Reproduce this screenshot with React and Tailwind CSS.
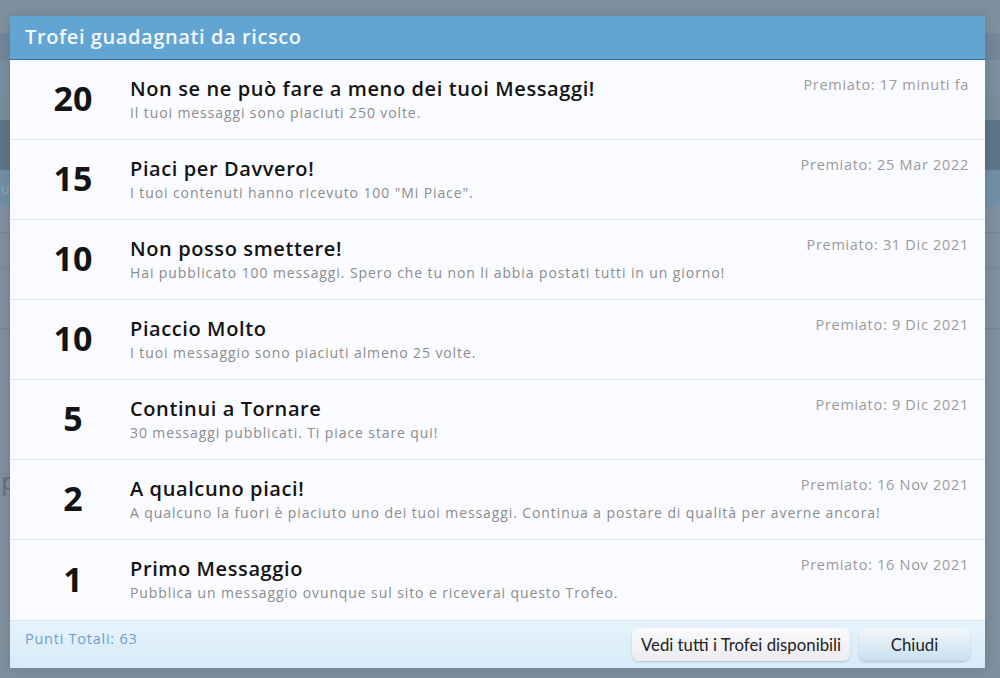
import React from "react";

const trophies = [
  { points: 20, title: "Non se ne può fare a meno dei tuoi Messaggi!", desc: "Il tuoi messaggi sono piaciuti 250 volte.", date: "Premiato: 17 minuti fa" },
  { points: 15, title: "Piaci per Davvero!", desc: 'I tuoi contenuti hanno ricevuto 100 "Mi Piace".', date: "Premiato: 25 Mar 2022" },
  { points: 10, title: "Non posso smettere!", desc: "Hai pubblicato 100 messaggi. Spero che tu non li abbia postati tutti in un giorno!", date: "Premiato: 31 Dic 2021" },
  { points: 10, title: "Piaccio Molto", desc: "I tuoi messaggio sono piaciuti almeno 25 volte.", date: "Premiato: 9 Dic 2021" },
  { points: 5, title: "Continui a Tornare", desc: "30 messaggi pubblicati. Ti piace stare qui!", date: "Premiato: 9 Dic 2021" },
  { points: 2, title: "A qualcuno piaci!", desc: "A qualcuno la fuori è piaciuto uno dei tuoi messaggi. Continua a postare di qualità per averne ancora!", date: "Premiato: 16 Nov 2021" },
  { points: 1, title: "Primo Messaggio", desc: "Pubblica un messaggio ovunque sul sito e riceverai questo Trofeo.", date: "Premiato: 16 Nov 2021" },
];

const TrophyRow = ({ t, last }) => (
  <div className={`relative flex h-[80px] ${last ? "" : "border-b border-[#dfe8ef]"}`}>
    <div className="w-[120px] flex items-center justify-center pl-[6px] pb-[2px] text-[34px] font-bold text-[#141414]">
      {t.points}
    </div>
    <div className="flex-1 pt-[15px] whitespace-nowrap">
      <div className="text-[20px] leading-[28px] font-semibold tracking-[0.6px] text-[#141414]">{t.title}</div>
      <div className="text-[14px] leading-[20px] tracking-[0.9px] text-[#8c8c8c]">{t.desc}</div>
    </div>
    <div className="absolute right-[16px] top-[15px] text-[14.5px] leading-[20px] tracking-[0.7px] text-[#9a9a9a]">{t.date}</div>
  </div>
);

export default function App() {
  return (
    <div className="relative w-[1000px] h-[678px] overflow-hidden bg-[#7f909e]" style={{ fontFamily: '"Open Sans", "DejaVu Sans", sans-serif' }}>
      {/* dimmed page behind the overlay */}
      <div className="flex flex-col">
        <div className="h-[33px]" />
        <div className="h-[27px] bg-[#73889a]" />
        <div className="h-[35px] bg-[#7a8fa0]" />
        <div className="h-[25px] bg-[#798d9d]" />
        <div className="h-[50px] bg-[#5f7689]" />
        <div className="h-[36px] bg-[#7190a6] text-[#8fa9bb] text-[14px] pl-[1px] pt-[8px]">u</div>
        <div className="h-[27px] border-b border-[#72879a]" />
        <div className="h-[36px] border-b border-[#72879a]" />
        <div className="h-[60px] border-b border-[#72879a]" />
        <div className="h-[170px] flex items-end text-[24px] text-[#5f6f7c]"><span className="-ml-[12px]">ap</span></div>
        <div className="h-[75px] flex items-end text-[24px] text-[#5f6f7c]"><span className="-ml-[14px]">e</span></div>
      </div>

      {/* modal */}
      <div className="absolute left-[10px] top-[16px] w-[975px] flex flex-col bg-[#fafbfe] shadow-[0_0_12px_rgba(0,0,0,0.15)]">
        <div className="h-[44px] bg-[#62a5d2] border-b border-[#2f6e9b] flex items-center px-[15px] pb-[2px] text-[20px] font-semibold tracking-[0.6px] text-[#f2f8fc]">
          Trofei guadagnati da ricsco
        </div>
        <div className="flex flex-col">
          {trophies.map((t, i) => (
            <TrophyRow key={i} t={t} last={i === trophies.length - 1} />
          ))}
        </div>
        <div className="h-[48px] flex items-center justify-between pl-[15px] pr-[15px] border-t border-[#d4e6f2] bg-gradient-to-b from-[#e6f3fc] to-[#d6ebf8]">
          <span className="text-[14.5px] tracking-[0.75px] text-[#6c9fc6] pb-[12px]">Punti Totali: 63</span>
          <div className="flex gap-[9px]" style={{ fontFamily: 'Lato, "Open Sans", sans-serif' }}>
            <button className="h-[33px] w-[218px] rounded-[7px] bg-gradient-to-b from-[#fbfbfd] to-[#ebebf1] text-[#222] text-[16.8px] shadow-[0_1px_2px_rgba(0,0,0,0.2)]">
              Vedi tutti i Trofei disponibili
            </button>
            <button className="h-[33px] w-[111px] rounded-[7px] bg-gradient-to-b from-[#f2f7fb] to-[#c8e0f1] text-[#222] text-[16.8px] shadow-[0_1px_2px_rgba(0,0,0,0.2)]">
              Chiudi
            </button>
          </div>
        </div>
      </div>
    </div>
  );
}
